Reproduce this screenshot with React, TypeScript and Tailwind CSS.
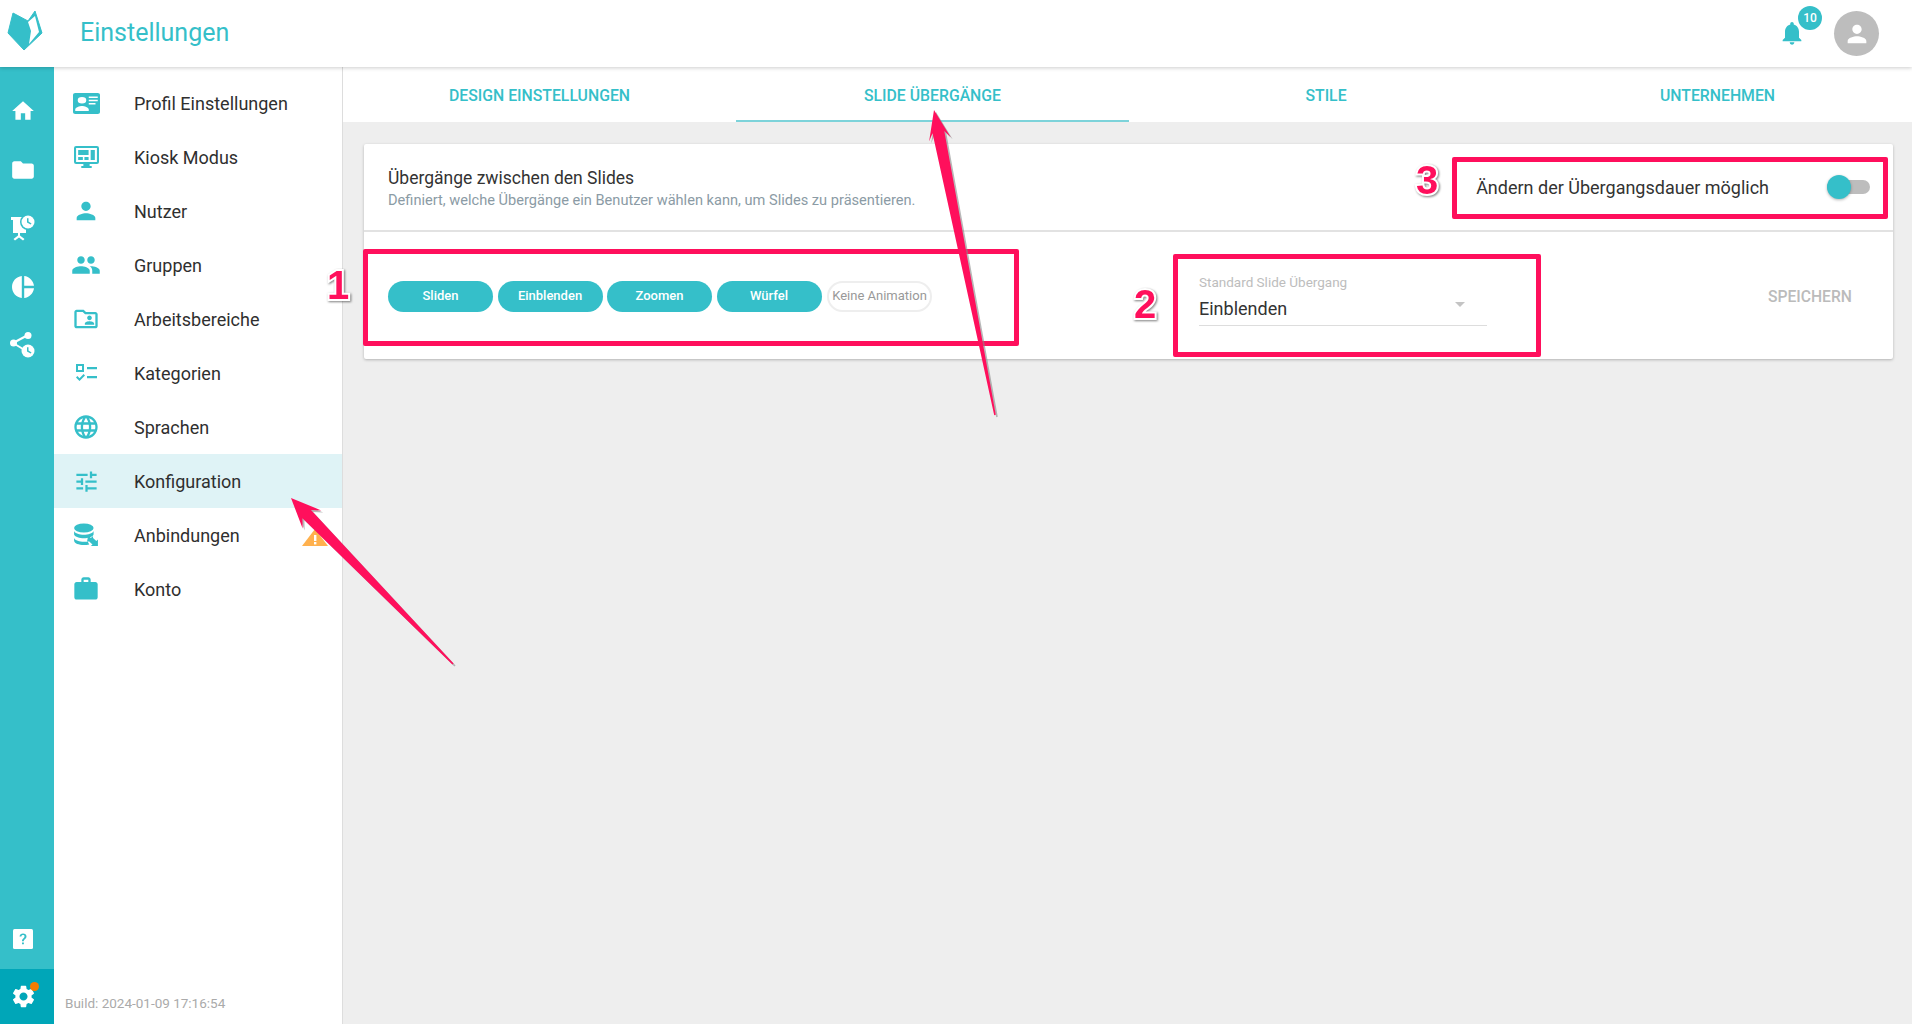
import type { ReactNode } from 'react';
import {
  MdFolder,
  MdHome,
  MdLanguage,
  MdNotifications,
  MdOutlineFolderShared,
  MdPeople,
  MdPerson,
  MdSettings,
  MdTune,
  MdWork,
} from 'react-icons/md';

const TEAL = '#35bfc9';

function Svg({ size = 24, w, h, children, className }: { size?: number; w?: number; h?: number; children: ReactNode; className?: string }) {
  return (
    <svg width={w ?? size} height={h ?? size} viewBox="0 0 24 24" preserveAspectRatio="none" fill="currentColor" className={className}>
      {children}
    </svg>
  );
}

function Logo() {
  return (
    <svg width="36" height="46" viewBox="0 0 36 46" className="shrink-0">
      <path d="M1 22 6 2 21 10 28 0 35 22 17 39z" fill={TEAL} strokeLinejoin="round" stroke={TEAL} strokeWidth="1" />
      <path d="M21 11 28 5 32 21 22 33 24 20z" fill="#fff" />
    </svg>
  );
}

function ProfileIcon() {
  return (
    <Svg w={27} h={21}>
      <path fillRule="evenodd" d="M2 0h20a2 2 0 0 1 2 2v20a2 2 0 0 1-2 2H2a2 2 0 0 1-2-2V2a2 2 0 0 1 2-2zm6 4.500a3.800 3.800 0 1 0 0 7.600 3.800 3.800 0 0 0 0-7.600zM2 20.500h12v-1.800c0-2.400-3.900-3.900-6-3.900s-6 1.500-6 3.900zM14 4v1.800h8V4zm0 3.800v1.700h8V7.800zm0 3.700v1.700h6v-1.700z" />
    </Svg>
  );
}

function KioskIcon() {
  return (
    <Svg w={25} h={24}>
      <path fillRule="evenodd" d="M2 1h20a2 2 0 0 1 2 2v14a2 2 0 0 1-2 2h-7v2h2v2H7v-2h2v-2H2a2 2 0 0 1-2-2V3a2 2 0 0 1 2-2zm0 2v14h20V3zm2 2h10v5H4zm12 0h4v10h-4zM4 12h4.500v3H4zm6 0h4v3h-4z" />
    </Svg>
  );
}

function ChecklistIcon() {
  return (
    <Svg>
      <path fillRule="evenodd" d="M2 3h8v8H2zm2 2v4h4V5zm9 1h10v2.200H13zm0 9h10v2.200H13zM2 16.500l1.400-1.400 2.100 2.100 4.100-4.100L11 14.500l-5.500 5.500z" />
    </Svg>
  );
}

function DatabaseIcon() {
  return (
    <Svg w={26} h={24}>
      <ellipse cx="10" cy="5" rx="9" ry="4.500" />
      <path d="M1 8c1 2.500 5 3.800 9 3.800S18 10.500 19 8v3.500c-1 2.500-5 3.700-9 3.700S2 14 1 11.500z" />
      <path d="M1 15c1 2.500 5 3.800 9 3.800 1.500 0 2.500-.1 3.500-.4l1.500 3c-1.500.4-3.200.6-5 .6-4.500 0-9-1.500-9-4.500z" />
      <path d="M14 12.500l2.500 2.500 2-2v2l3 3 1.500-1.500V23h-6.500l1.500-1.500-3-3h-2z" />
    </Svg>
  );
}

function WarningIcon() {
  return (
    <svg width="26" height="18" viewBox="0 0 26 18" className="absolute left-[248px] top-[21px]">
      <path d="M13 0 26 17H0z" fill="#ffb14e" />
      <rect x="12" y="6" width="2.400" height="6" fill="#fff" />
      <rect x="12" y="13" width="2.400" height="2.400" fill="#fff" />
    </svg>
  );
}

function PresentationClockIcon() {
  return (
    <svg width="26" height="26" viewBox="0 0 26 26">
      <path d="M1 2H18V5H16V18H3V5H1z" fill="#fff" />
      <path d="M8 17.500H10V20.500L14.500 24 13 25.500 9 22.500 5 25.500 3.500 24 8 20.500z" fill="#fff" />
      <circle cx="18" cy="7" r="8" fill={TEAL} />
      <circle cx="18" cy="7" r="6.500" fill="#fff" />
      <path d="M17 3.200H18.500V6.600L21.500 8.400 20.700 9.600 17 7.400z" fill={TEAL} />
    </svg>
  );
}

function PieIcon() {
  return (
    <Svg>
      <path d="M10.800 1v22C5.200 22.500 1 17.700 1 12S5.200 1.500 10.800 1zM13.200 1c5 .5 9.300 4.800 9.800 9.800h-9.800zM13.200 13.200H23c-.5 5-4.800 9.300-9.800 9.800z" />
    </Svg>
  );
}

function ShareClockIcon() {
  return (
    <svg width="26" height="26" viewBox="0 0 26 26">
      <path d="M3 11 18 3M3 11 13 17" stroke="#fff" strokeWidth="2" />
      <circle cx="18" cy="3.500" r="3.500" fill="#fff" />
      <circle cx="3.500" cy="11" r="3.500" fill="#fff" />
      <circle cx="18" cy="19" r="6.500" fill="#fff" />
      <path d="M17 15.200H18.500V18.600L21.500 20.400 20.700 21.600 17 19.400z" fill={TEAL} />
    </svg>
  );
}

function HelpIcon() {
  return (
    <svg width="20" height="20" viewBox="0 0 20 20">
      <rect width="20" height="20" rx="1.500" fill="#fff" />
      <path d="M6.500 7.500C6.700 5.500 8.200 4.400 10 4.400c2 0 3.500 1.200 3.500 3 0 2.500-2.700 2.700-2.700 4.800H9c0-3 2.500-3.200 2.500-4.800 0-.8-.6-1.300-1.500-1.300s-1.500.6-1.600 1.400zM9 13.400h1.900v1.900H9z" fill={TEAL} />
    </svg>
  );
}

const RAIL: ReactNode[] = [
  <MdHome key="home" size={26} />,
  <MdFolder key="folder" size={26} />,
  <PresentationClockIcon key="pres" />,
  <PieIcon key="pie" />,
  <ShareClockIcon key="share" />,
];

const NAV: Array<{ label: string; icon: ReactNode; active?: boolean; warn?: boolean }> = [
  { label: 'Profil Einstellungen', icon: <ProfileIcon /> },
  { label: 'Kiosk Modus', icon: <KioskIcon /> },
  { label: 'Nutzer', icon: <MdPerson size={28} /> },
  { label: 'Gruppen', icon: <MdPeople size={30} /> },
  { label: 'Arbeitsbereiche', icon: <MdOutlineFolderShared size={28} /> },
  { label: 'Kategorien', icon: <ChecklistIcon /> },
  { label: 'Sprachen', icon: <MdLanguage size={28} /> },
  { label: 'Konfiguration', icon: <MdTune size={27} />, active: true },
  { label: 'Anbindungen', icon: <DatabaseIcon />, warn: true },
  { label: 'Konto', icon: <MdWork size={28} /> },
];

const TABS = ['Design Einstellungen', 'Slide Übergänge', 'Stile', 'Unternehmen'];
const CHIPS = ['Sliden', 'Einblenden', 'Zoomen', 'Würfel'];

function Header() {
  return (
    <header className="relative z-10 flex h-[67px] shrink-0 items-center bg-white pl-[7px] pr-[33px] shadow-[0_1px_4px_rgba(0,0,0,0.2)]">
      <Logo />
      <h1 className="ml-[37px] -mt-[1px] text-[25px] font-normal text-[#35bfc9]">Einstellungen</h1>
      <div className="ml-auto flex items-center gap-[28px]">
        <div className="relative -mt-[2px] text-[#35bfc9]">
          <MdNotifications size={28} />
          <span className="absolute -right-[16px] -top-[13px] flex h-[24px] w-[24px] items-center justify-center rounded-full bg-[#35bfc9] text-[12px] font-medium text-white">
            10
          </span>
        </div>
        <div className="flex h-[45px] w-[45px] items-center justify-center rounded-full bg-[#bdbdbd] text-white">
          <MdPerson size={28} />
        </div>
      </div>
    </header>
  );
}

function Rail() {
  return (
    <div className="flex w-[54px] shrink-0 flex-col bg-[#35bfc9] pt-[15px] text-white">
      {RAIL.map((icon, i) => (
        <div key={i} className="flex h-[58.5px] items-center justify-center pr-[8px]">
          {icon}
        </div>
      ))}
      <div className="mt-auto flex h-[55px] items-center justify-center pb-[5px] pr-[8px]">
        <HelpIcon />
      </div>
      <div className="relative flex h-[55px] items-center justify-center bg-[#00a6b8] pr-[8px]">
        <MdSettings size={27} />
        <span className="absolute left-[30px] top-[13px] h-[9px] w-[9px] rounded-full bg-[#f57c00]" />
      </div>
    </div>
  );
}

function Sidebar() {
  return (
    <nav className="flex w-[289px] shrink-0 flex-col border-r border-[#dddddd] bg-white pt-[9px]">
      {NAV.map((item) => (
        <div
          key={item.label}
          className={`relative flex h-[54px] items-center text-[18px] text-[#2f2f2f] ${item.active ? 'bg-[#dff3f6]' : ''}`}
        >
          <span className="ml-[16px] flex w-[32px] items-center justify-center text-[#35bfc9]">{item.icon}</span>
          <span className="ml-[32px]">{item.label}</span>
          {item.warn && <WarningIcon />}
        </div>
      ))}
      <div className="mt-auto pb-[11px] pl-[11px] text-[13.5px] text-[#aaaaaa]">Build: 2024-01-09 17:16:54</div>
    </nav>
  );
}

function Tabs() {
  return (
    <div className="grid h-[55px] shrink-0 grid-cols-[393px_393px_394px_1fr] bg-white">
      {TABS.map((tab, i) => (
        <div
          key={tab}
          className={`flex items-center justify-center border-b-[2px] pt-[4px] text-[15.8px] font-medium uppercase text-[#35bfc9] ${i === 1 ? 'border-[#7dd3da]' : 'border-transparent'}`}
        >
          {tab}
        </div>
      ))}
    </div>
  );
}

function Card() {
  return (
    <section className="ml-[21px] mr-[19px] mt-[22px] h-[215px] rounded-[2px] bg-white shadow-[0_1px_3px_rgba(0,0,0,0.25)]">
      <div className="flex h-[88px] items-center border-b-[2px] border-[#e2e2e2] pl-[24px] pr-[23px]">
        <div className="pt-[4px]">
          <div className="text-[17.5px] leading-[20px] text-[#333333]">Übergänge zwischen den Slides</div>
          <div className="mt-[2px] text-[14.6px] leading-[20px] text-[#8b9ba5]">
            Definiert, welche Übergänge ein Benutzer wählen kann, um Slides zu präsentieren.
          </div>
        </div>
        <div className="ml-auto flex items-center">
          <span className="text-[18px] text-[#333333]">Ändern der Übergangsdauer möglich</span>
          <span className="relative ml-[58px] block h-[14px] w-[43px] rounded-full bg-[#bdbdbd]">
            <span className="absolute -top-[5px] left-0 h-[24px] w-[24px] rounded-full bg-[#35bfc9] shadow-[0_1px_3px_rgba(0,0,0,0.3)]" />
          </span>
        </div>
      </div>
      <div className="flex h-[125px] items-center pl-[24px] pr-[41px]">
        <div className="mt-[3px] flex w-[811px] gap-[4.5px]">
          {CHIPS.map((chip) => (
            <span
              key={chip}
              className="flex h-[31px] w-[105px] items-center justify-center rounded-full bg-[#35bfc9] text-[13px] font-medium text-white"
            >
              {chip}
            </span>
          ))}
          <span className="ml-[1px] flex h-[31px] w-[105px] items-center justify-center rounded-full border-[2px] border-[#eeeeee] text-[13px] text-[#999999]">
            Keine Animation
          </span>
        </div>
        <div className="relative mt-[11px] w-[288px]">
          <div className="text-[13.5px] leading-[16px] text-[#bdbdbd]">Standard Slide Übergang</div>
          <div className="mt-[7px] border-b border-[#dddddd] pb-[4px] text-[18px] leading-[24px] text-[#333333]">Einblenden</div>
          <span className="absolute right-[22px] top-[28px] h-0 w-0 border-x-[5px] border-t-[5px] border-x-transparent border-t-[#c4c4c4]" />
        </div>
        <div className="ml-auto mt-[4px] text-[15.7px] font-medium text-[#bbbbbb]">SPEICHERN</div>
      </div>
    </section>
  );
}

/* Tapered annotation arrow: a sharp tail widening up to a notched head. */
function arrowPoints(tip: [number, number], tail: [number, number], headLen: number, headHalf: number, shaftHalf: number) {
  const dx = tail[0] - tip[0];
  const dy = tail[1] - tip[1];
  const len = Math.hypot(dx, dy);
  const ux = dx / len;
  const uy = dy / len;
  const at = (along: number, side: number) => `${tip[0] + ux * along - uy * side},${tip[1] + uy * along + ux * side}`;
  return [
    at(0, 0),
    at(headLen, headHalf),
    at(headLen * 0.75, shaftHalf),
    at(len, 0.8),
    at(len, -0.8),
    at(headLen * 0.75, -shaftHalf),
    at(headLen, -headHalf),
  ].join(' ');
}

function Annotations() {
  const boxes = [
    'left-[363px] top-[249px] h-[97px] w-[656px]',
    'left-[1173px] top-[254px] h-[103px] w-[368px]',
    'left-[1452px] top-[157px] h-[62px] w-[436px]',
  ];
  const digits = [
    { n: '1', pos: 'left-[327px] top-[262px]' },
    { n: '2', pos: 'left-[1134px] top-[281px]' },
    { n: '3', pos: 'left-[1416px] top-[157px]' },
  ];
  return (
    <div className="pointer-events-none absolute inset-0 z-20">
      {boxes.map((pos) => (
        <div key={pos} className={`absolute rounded-[2px] border-[5px] border-[#ff0f5c] ${pos}`} />
      ))}
      {digits.map((d) => (
        <span
          key={d.n}
          className={`absolute font-['Liberation_Sans',sans-serif] text-[40px] leading-[46px] font-bold text-[#ff0f5c] [-webkit-text-stroke:4px_white] [paint-order:stroke] drop-shadow-[1px_1px_1px_rgba(0,0,0,0.5)] ${d.pos}`}
        >
          {d.n}
        </span>
      ))}
      <svg width="1912" height="1024" className="absolute inset-0">
        <polygon points={arrowPoints([291, 498], [453, 664], 30, 13, 6)} fill="#888888" opacity="0.6" transform="translate(2 2)" />
        <polygon points={arrowPoints([291, 498], [453, 664], 30, 13, 6)} fill="#ff0f5c" />
        <polygon points={arrowPoints([934, 110], [995, 415], 30, 11, 6)} fill="#888888" opacity="0.6" transform="translate(2 2)" />
        <polygon points={arrowPoints([934, 110], [995, 415], 30, 11, 6)} fill="#ff0f5c" />
      </svg>
    </div>
  );
}

export default function App() {
  return (
    <div className="relative flex h-screen w-full flex-col overflow-hidden bg-[#eeeeee] font-['Roboto',sans-serif]">
      <Header />
      <div className="flex min-h-0 flex-1">
        <Rail />
        <Sidebar />
        <main className="min-w-0 flex-1">
          <Tabs />
          <Card />
        </main>
      </div>
      <Annotations />
    </div>
  );
}
